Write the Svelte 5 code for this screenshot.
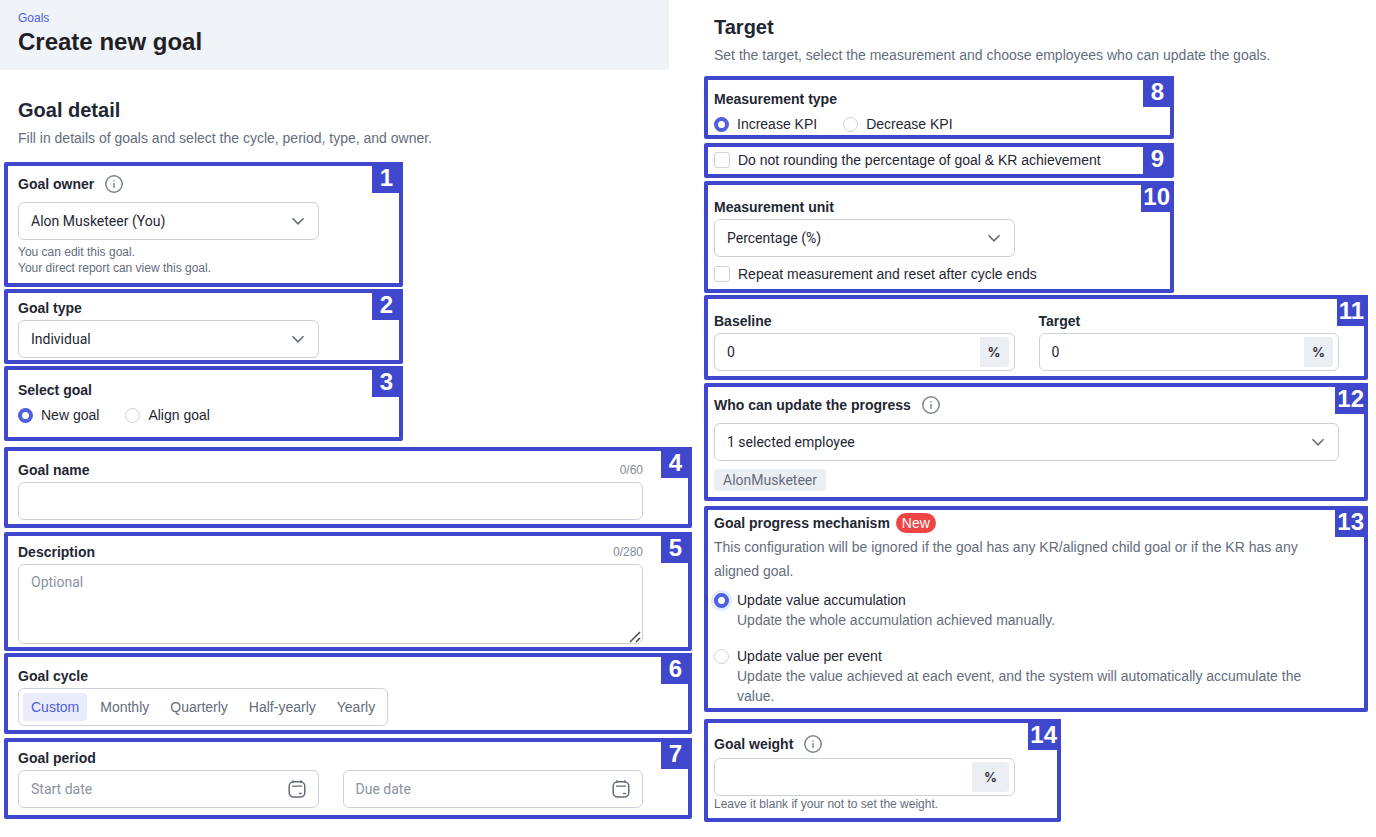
<script lang="ts">
  const cycles = ["Custom", "Monthly", "Quarterly", "Half-yearly", "Yearly"];

  let owner = $state("Alon Musketeer (You)");
  let goalType = $state("Individual");
  let source = $state("new");
  let goalName = $state("");
  let description = $state("");
  let cycle = $state("Custom");
  let startDate = $state("");
  let dueDate = $state("");
  let direction = $state("increase");
  let noRounding = $state(false);
  let unit = $state("Percentage (%)");
  let repeat = $state(false);
  let baseline = $state("0");
  let target = $state("0");
  let updaters = $state("1 selected employee");
  let mechanism = $state("accumulation");
  let weight = $state("");
</script>

{#snippet info(label: string)}
  <button type="button" class="info" aria-label={label}>
    <svg viewBox="0 0 18 18" width="18" height="18" fill="none" stroke="#7c8494" aria-hidden="true">
      <circle cx="9" cy="9" r="8.2" stroke-width="1.5" />
      <path d="M9 8v5M9 5.2v1.4" stroke-width="1.4" />
    </svg>
  </button>
{/snippet}

{#snippet chevron()}
  <svg class="chevron" viewBox="0 0 14 14" width="14" height="14" fill="none" stroke="#666c78" stroke-width="1.6" aria-hidden="true">
    <path d="M1.5 4.2 7 9.8l5.5-5.6" />
  </svg>
{/snippet}

{#snippet calendar()}
  <svg class="calendar" viewBox="0 0 18 18" width="18" height="18" fill="none" stroke="#626b7b" stroke-linecap="round" aria-hidden="true">
    <rect x="1.2" y="1.7" width="15.6" height="15.3" rx="4.5" stroke-width="1.5" />
    <path d="M5 .8v1.6M13 .8v1.6" stroke-width="1.4" />
    <path d="M4.5 6.2h9M11.5 13.5h1.8" stroke-width="1.3" />
  </svg>
{/snippet}

<main>
  <div class="col detail">
    <header>
      <a href="#goals">Goals</a>
      <h1>Create new goal</h1>
    </header>

    <div class="intro">
      <h2>Goal detail</h2>
      <p>Fill in details of goals and select the cycle, period, type, and owner.</p>
    </div>

    <section class="box short owner">
      <span class="tag">1</span>
      <div class="label"><label for="owner">Goal owner</label>{@render info("About goal owner")}</div>
      <div class="control">
        <select id="owner" bind:value={owner}><option>Alon Musketeer (You)</option></select>
        {@render chevron()}
      </div>
      <p class="hint">You can edit this goal.<br />Your direct report can view this goal.</p>
    </section>

    <section class="box short type">
      <span class="tag">2</span>
      <div class="label"><label for="type">Goal type</label></div>
      <div class="control">
        <select id="type" bind:value={goalType}><option>Individual</option></select>
        {@render chevron()}
      </div>
    </section>

    <section class="box short source">
      <span class="tag">3</span>
      <div class="label" id="source-label">Select goal</div>
      <div class="options" role="radiogroup" aria-labelledby="source-label">
        <label class="option"><input type="radio" value="new" bind:group={source} />New goal</label>
        <label class="option"><input type="radio" value="align" bind:group={source} />Align goal</label>
      </div>
    </section>

    <section class="box name">
      <span class="tag">4</span>
      <div class="label"><label for="name">Goal name</label><span class="count">{goalName.length}/60</span></div>
      <div class="control wide"><input id="name" type="text" maxlength="60" bind:value={goalName} /></div>
    </section>

    <section class="box description">
      <span class="tag">5</span>
      <div class="label"><label for="description">Description</label><span class="count">{description.length}/280</span></div>
      <div class="control wide">
        <textarea id="description" maxlength="280" placeholder="Optional" bind:value={description}></textarea>
        <svg class="grip" viewBox="0 0 12 12" width="12" height="12" stroke="#4a4a4a" stroke-width="1.5" aria-hidden="true">
          <path d="M1 11 11 1M7 11l4-4" />
        </svg>
      </div>
    </section>

    <section class="box cycle">
      <span class="tag">6</span>
      <div class="label" id="cycle-label">Goal cycle</div>
      <div class="segments" role="group" aria-labelledby="cycle-label">
        {#each cycles as c}
          <button type="button" class:active={cycle === c} aria-pressed={cycle === c} onclick={() => (cycle = c)}>{c}</button>
        {/each}
      </div>
    </section>

    <section class="box period">
      <span class="tag">7</span>
      <div class="label" id="period-label">Goal period</div>
      <div class="pair" role="group" aria-labelledby="period-label">
        <div class="control wide">
          <input type="text" placeholder="Start date" aria-label="Start date" bind:value={startDate} />
          {@render calendar()}
        </div>
        <div class="control wide">
          <input type="text" placeholder="Due date" aria-label="Due date" bind:value={dueDate} />
          {@render calendar()}
        </div>
      </div>
    </section>
  </div>

  <div class="col target">
    <div class="intro">
      <h2>Target</h2>
      <p>Set the target, select the measurement and choose employees who can update the goals.</p>
    </div>

    <section class="box medium direction">
      <span class="tag">8</span>
      <div class="label" id="direction-label">Measurement type</div>
      <div class="options" role="radiogroup" aria-labelledby="direction-label">
        <label class="option"><input type="radio" value="increase" bind:group={direction} />Increase KPI</label>
        <label class="option"><input type="radio" value="decrease" bind:group={direction} />Decrease KPI</label>
      </div>
    </section>

    <section class="box medium rounding">
      <span class="tag">9</span>
      <label class="option"><input type="checkbox" bind:checked={noRounding} />Do not rounding the percentage of goal &amp; KR achievement</label>
    </section>

    <section class="box medium unit">
      <span class="tag">10</span>
      <div class="label"><label for="unit">Measurement unit</label></div>
      <div class="control">
        <select id="unit" bind:value={unit}><option>Percentage (%)</option></select>
        {@render chevron()}
      </div>
      <label class="option repeat"><input type="checkbox" bind:checked={repeat} />Repeat measurement and reset after cycle ends</label>
    </section>

    <section class="box values">
      <span class="tag">11</span>
      <div class="pair">
        <div>
          <div class="label"><label for="baseline">Baseline</label></div>
          <div class="control wide"><input id="baseline" type="text" bind:value={baseline} /><span class="suffix">%</span></div>
        </div>
        <div>
          <div class="label"><label for="target">Target</label></div>
          <div class="control wide"><input id="target" type="text" bind:value={target} /><span class="suffix">%</span></div>
        </div>
      </div>
    </section>

    <section class="box updaters">
      <span class="tag">12</span>
      <div class="label"><label for="updaters">Who can update the progress</label>{@render info("About progress updates")}</div>
      <div class="control wide">
        <select id="updaters" bind:value={updaters}><option>1 selected employee</option></select>
        {@render chevron()}
      </div>
      <span class="chip">AlonMusketeer</span>
    </section>

    <section class="box mechanism">
      <span class="tag">13</span>
      <div class="label" id="mechanism-label">Goal progress mechanism<span class="new">New</span></div>
      <p class="note">This configuration will be ignored if the goal has any KR/aligned child goal or if the KR has any aligned goal.</p>
      <div class="choices" role="radiogroup" aria-labelledby="mechanism-label">
        <div>
          <label class="option"><input class="focused" type="radio" value="accumulation" aria-describedby="accumulation-desc" bind:group={mechanism} />Update value accumulation</label>
          <p id="accumulation-desc">Update the whole accumulation achieved manually.</p>
        </div>
        <div>
          <label class="option"><input type="radio" value="event" aria-describedby="event-desc" bind:group={mechanism} />Update value per event</label>
          <p id="event-desc">Update the value achieved at each event, and the system will automatically accumulate the value.</p>
        </div>
      </div>
    </section>

    <section class="box weight">
      <span class="tag">14</span>
      <div class="label"><label for="weight">Goal weight</label>{@render info("About goal weight")}</div>
      <div class="control"><input id="weight" type="text" bind:value={weight} /><span class="suffix roomy">%</span></div>
      <p class="hint">Leave it blank if your not to set the weight.</p>
    </section>
  </div>
</main>

<style>
  :global(body) { background: #fff; }
  main {
    --frame: #3f48cc;
    --accent: #4f5fdd;
    --ink: #1f2733;
    --muted: #646d7c;
    --line: #ccd2dc;
    --fill: #ebeef2;
    display: grid; grid-template-columns: 700fr 676fr;
    font-family: "Liberation Sans", Arial, sans-serif; font-size: 14px; line-height: 20px; color: var(--ink);
  }
  h1, h2, p { margin: 0; }
  button, input, select, textarea { font: inherit; color: inherit; margin: 0; box-sizing: border-box; }
  .col { display: flex; flex-direction: column; align-items: flex-start; min-width: 0; }

  header { align-self: stretch; box-sizing: border-box; margin-right: 31px; padding: 10px 18px 12px; background: #f0f3f8; }
  header a { display: block; font-size: 12px; line-height: 16px; color: var(--accent); text-decoration: none; }
  h1 { font-size: 24px; line-height: 32px; color: #1f2023; }
  h2 { font-size: 20px; line-height: 28px; }
  .intro { padding: 26px 18px 14px; }
  .intro p { margin-top: 4px; color: var(--muted); }
  .target .intro { padding: 13px 14px 11px; }

  .box { position: relative; box-sizing: border-box; border: 4px solid var(--frame); border-radius: 2px; }
  .detail .box { width: calc(100% - 12px); margin-left: 4px; padding-left: 10px; padding-right: 45px; }
  .detail .short { width: 57%; }
  .target .box { width: calc(100% - 12px); margin-left: 4px; padding-left: 6px; padding-right: 25px; }
  .target .medium { width: 470px; max-width: 100%; }
  .target .weight { width: 357px; max-width: 100%; }
  .tag {
    position: absolute; top: -4px; right: -4px; box-sizing: border-box; min-width: 31px; height: 31px; padding: 0 4px 0 2px;
    background: var(--frame); color: #fff; font-size: 24px; font-weight: 700; line-height: 32px; text-align: center;
  }

  .owner { padding-top: 8px; padding-bottom: 7px; margin-bottom: 2px; }
  .type { padding-top: 5px; padding-bottom: 2px; margin-bottom: 2px; }
  .source { padding-top: 10px; padding-bottom: 12px; margin-bottom: 6px; }
  .name { padding-top: 9px; padding-bottom: 4px; margin-bottom: 4px; }
  .description { padding-top: 6px; padding-bottom: 3px; margin-bottom: 2px; }
  .cycle { padding-top: 9px; padding-bottom: 4px; margin-bottom: 4px; }
  .period { padding-top: 6px; padding-bottom: 7px; }
  .direction { padding-top: 9px; padding-bottom: 1px; margin-bottom: 4px; }
  .rounding { padding-top: 3px; padding-bottom: 4px; margin-bottom: 3px; }
  .unit { padding-top: 12px; padding-bottom: 5px; margin-bottom: 2px; }
  .values { padding-top: 12px; padding-bottom: 5px; margin-bottom: 3px; }
  .updaters { padding-top: 8px; padding-bottom: 6px; margin-bottom: 5px; }
  .mechanism { padding-top: 3px; padding-bottom: 2px; margin-bottom: 7px; }
  .weight { padding-top: 11px; padding-bottom: 6px; }

  .label { display: flex; align-items: center; height: 20px; margin-bottom: 2px; font-weight: 700; }
  .owner .label, .updaters .label { margin-bottom: 8px; }
  .weight .label { margin-bottom: 4px; }
  .source .label, .direction .label { margin-bottom: 5px; }
  .info { display: flex; margin-left: 11px; padding: 0; border: 0; background: none; cursor: pointer; }
  .count { margin-left: auto; font-size: 12px; font-weight: 400; color: #818998; }

  .control { position: relative; width: 301px; max-width: 100%; }
  .wide { width: 100%; }
  .control, .chip { font-family: Roboto, "Liberation Sans", sans-serif; }
  .control input, .control select, .control textarea {
    display: block; width: 100%; height: 38px; padding: 0 12px; background: #fff;
    border: 1px solid var(--line); border-radius: 6px; outline: none; appearance: none;
  }
  .control textarea { height: 80px; padding: 7px 12px; resize: none; }
  .control ::placeholder { color: #8b93a1; opacity: 1; }
  .chevron, .calendar { position: absolute; right: 14px; top: 12px; pointer-events: none; }
  .calendar { top: 10px; right: 13px; }
  .grip { position: absolute; right: 2px; bottom: 1px; pointer-events: none; }
  .suffix {
    position: absolute; top: 4px; right: 6px; width: 29px; border-radius: 0 4px 4px 0;
    background: var(--fill); font-family: Inter, sans-serif; font-size: 13px; font-weight: 600; line-height: 30px; text-align: center;
  }
  .roomy { width: 37px; }
  .hint { margin-top: 4px; font-size: 12px; line-height: 16px; color: var(--muted); }
  .weight .hint { margin-top: 0; }
  .pair { display: grid; grid-template-columns: 1fr 1fr; gap: 24px; }

  .options { display: flex; gap: 26px; }
  .option { display: flex; align-items: center; gap: 8px; cursor: pointer; }
  .option input { flex: none; appearance: none; width: 15px; height: 15px; border: 1px solid var(--line); border-radius: 50%; background: #fff; }
  .option input[type="radio"]:checked { border: 4px solid var(--accent); }
  .option input.focused:checked { box-shadow: 0 0 0 3px #e0eafc; }
  .option input[type="checkbox"] { width: 16px; height: 16px; border-radius: 3px; }
  .option input[type="checkbox"]:checked { background: var(--accent); }
  .repeat { margin-top: 7px; }

  .segments { display: inline-flex; gap: 5px; padding: 4px; border: 1px solid var(--line); border-radius: 6px; vertical-align: top; }
  .segments button { height: 28px; padding: 0 8px; border: 0; border-radius: 4px; background: none; color: var(--muted); cursor: pointer; }
  .segments .active { background: #eaebfb; color: var(--accent); }

  .chip { display: block; width: fit-content; margin-top: 8px; padding: 1px 9px; border-radius: 4px; background: var(--fill); color: var(--muted); }
  .new { margin-left: 6px; padding: 0 6px; border-radius: 10px; background: #ef4444; color: #fff; font-weight: 400; }
  .note { line-height: 24px; color: var(--muted); }
  .choices { display: flex; flex-direction: column; gap: 16px; margin-top: 7px; }
  .choices p { margin: 0 0 0 23px; color: var(--muted); }
</style>
